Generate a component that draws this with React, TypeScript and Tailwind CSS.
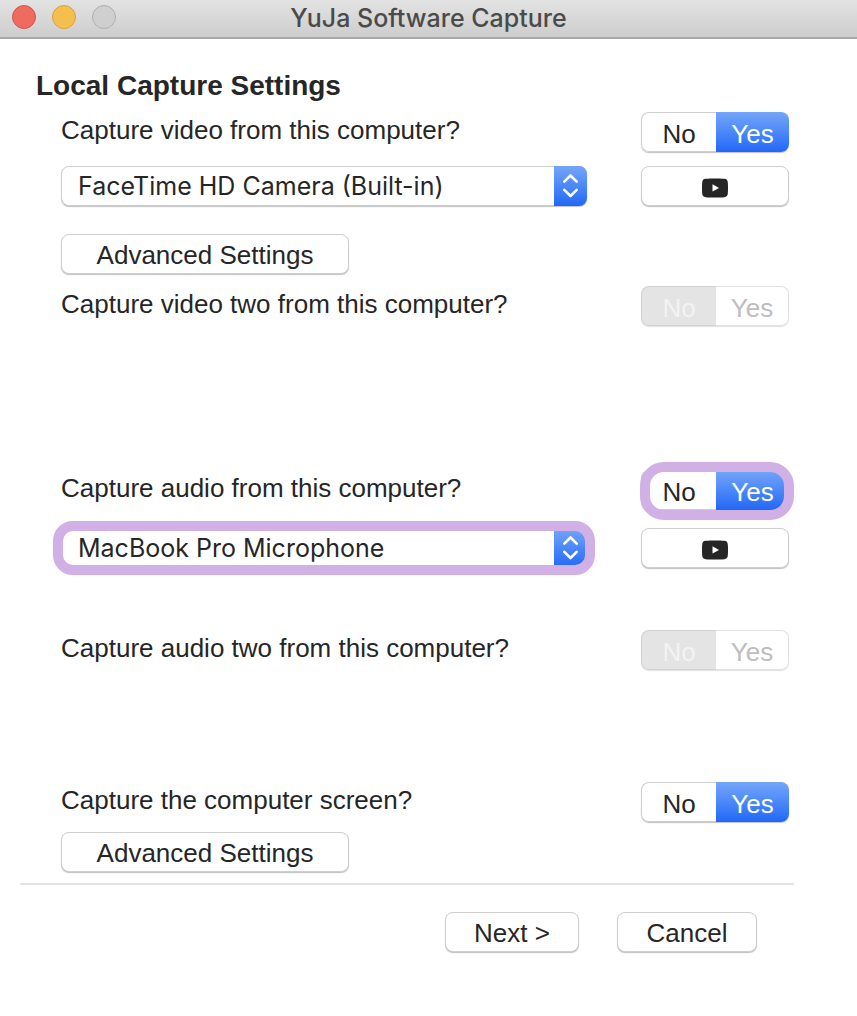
import { useState } from "react";

function YesNo({
  name,
  label,
  initial,
  disabled = false,
  highlighted = false,
}: {
  name: string;
  label: string;
  initial: "no" | "yes";
  disabled?: boolean;
  highlighted?: boolean;
}) {
  const [value, setValue] = useState(initial);

  return (
    <div
      role="radiogroup"
      aria-label={label}
      className={`relative flex h-10 w-[148px] shrink-0 rounded-lg ${
        disabled
          ? "shadow-[0_1px_1px_rgba(0,0,0,0.12)]"
          : "shadow-[0_1px_1px_rgba(0,0,0,0.25)]"
      }`}
    >
      <label className="flex w-[75px]">
        <input
          type="radio"
          name={name}
          checked={value === "no"}
          onChange={() => setValue("no")}
          disabled={disabled}
          className="peer sr-only"
        />
        <span className="flex w-full items-center justify-center rounded-l-lg border border-r-0 border-[#cfcfcf] bg-white pt-1 text-[#262626] peer-checked:border-[#2f70f6] peer-checked:bg-linear-to-b peer-checked:from-[#74a5f8] peer-checked:to-[#2167f7] peer-checked:text-white peer-disabled:border-[#d2d2d2] peer-disabled:bg-[#e4e4e4] peer-disabled:bg-none peer-disabled:text-[#f3f3f3]">
          No
        </span>
      </label>
      <label className="flex flex-1">
        <input
          type="radio"
          name={name}
          checked={value === "yes"}
          onChange={() => setValue("yes")}
          disabled={disabled}
          className="peer sr-only"
        />
        <span className="flex w-full items-center justify-center rounded-r-lg border border-l-0 border-[#cfcfcf] bg-white pt-1 text-[#262626] peer-checked:border-0 peer-checked:bg-linear-to-b peer-checked:from-[#74a5f8] peer-checked:to-[#2167f7] peer-checked:text-white peer-disabled:border-[#e2e2e2] peer-disabled:text-[#bdbdbd]">
          Yes
        </span>
      </label>
      {highlighted && (
        <span className="pointer-events-none absolute -top-2 -right-[5px] -bottom-[10px] -left-px rounded-3xl border-[10px] border-[#d0b0e5]" />
      )}
    </div>
  );
}

function DeviceSelect({
  label,
  options,
  highlighted = false,
}: {
  label: string;
  options: string[];
  highlighted?: boolean;
}) {
  return (
    <div className="relative flex h-10 max-w-[526px] flex-1">
      <select
        aria-label={label}
        className="w-full appearance-none rounded-lg border border-[#cfcfcf] bg-white pr-10 pl-4 font-['Inter',sans-serif] text-[25px] text-[#262626] shadow-[0_1px_1px_rgba(0,0,0,0.25)]"
      >
        {options.map((option) => (
          <option key={option}>{option}</option>
        ))}
      </select>
      <span className="pointer-events-none absolute inset-y-0 right-0 flex w-[33px] items-center justify-center rounded-r-lg bg-linear-to-b from-[#74a5f8] to-[#2167f7]">
        <svg
          className="h-6 w-4"
          viewBox="0 0 16 24"
          fill="none"
          stroke="white"
          strokeWidth="2.6"
          strokeLinecap="round"
          strokeLinejoin="round"
        >
          <path d="M1.3 7.7 7.5 1.5l6.2 6.2M1.3 15.8 7.500 22l6.200-6.200" />
        </svg>
      </span>
      {highlighted && (
        <span className="pointer-events-none absolute -inset-x-2 -inset-y-[7px] rounded-[20px] border-[10px] border-[#d0b0e5]" />
      )}
    </div>
  );
}

const buttonStyle =
  "flex h-10 items-center justify-center rounded-lg border border-[#cfcfcf] bg-white pt-0.5 shadow-[0_1px_1px_rgba(0,0,0,0.25)]";

function PreviewButton({ label }: { label: string }) {
  return (
    <button aria-label={label} className={`${buttonStyle} w-[148px] shrink-0`}>
      <svg className="h-[22px] w-[26px]" viewBox="0 0 26 22">
        <path
          d="M3.6 2.800C9 2.300 17 2.300 22.400 2.800c2.200.2 3.300 1.500 3.400 3.600.3 3.700.3 7.500 0 11.200-.1 2.100-1.200 3.400-3.400 3.600-5.400.5-13.400.5-18.800 0C1.400 21 .3 19.700.2 17.600c-.3-3.700-.3-7.500 0-11.200C.3 4.300 1.400 3 3.600 2.800Z"
          fill="#262626"
        />
        <path d="M10.500 8.300v7.200l6.500-3.600Z" fill="white" />
      </svg>
    </button>
  );
}

function Question({ children }: { children: string }) {
  return <p className="leading-9">{children}</p>;
}

export default function App() {
  return (
    <div className="min-h-screen bg-white font-['Liberation_Sans',Arial,sans-serif] text-[26px] leading-9 text-[#262626]">
      <header className="relative flex h-[39px] items-center justify-center border-b-2 border-[#a8a8a8] bg-linear-to-b from-[#e3e3e3] to-[#cdcdcd]">
        <div className="absolute top-[5px] left-3 flex gap-4">
          <button
            aria-label="Close"
            className="size-6 rounded-full border border-[#d9534b] bg-[#ed6b5f]"
          />
          <button
            aria-label="Minimize"
            className="size-6 rounded-full border border-[#dba03a] bg-[#f5bf4f]"
          />
          <button
            aria-label="Zoom"
            disabled
            className="size-6 rounded-full border border-[#b0b0b0] bg-[#cfcfcf]"
          />
        </div>
        <h1 className="pb-0.5 font-['Inter',sans-serif] text-[25px] font-medium text-[#4a4a4a]">
          YuJa Software Capture
        </h1>
      </header>

      <main className="pt-[29px]">
        <h2 className="pl-9 text-[28px] leading-9 font-bold">
          Local Capture Settings
        </h2>

        <div className="pr-[68px] pl-[61px]">
          <div className="mt-2 flex items-start justify-between">
            <Question>Capture video from this computer?</Question>
            <YesNo name="video" label="Capture video" initial="yes" />
          </div>
          <div className="mt-3.5 flex justify-between gap-[54px]">
            <DeviceSelect
              label="Camera"
              options={["FaceTime HD Camera (Built-in)"]}
            />
            <PreviewButton label="Preview video" />
          </div>
          <button className={`${buttonStyle} mt-7 w-72`}>
            Advanced Settings
          </button>
          <div className="mt-3 flex items-start justify-between">
            <Question>Capture video two from this computer?</Question>
            <YesNo
              name="video-two"
              label="Capture video two"
              initial="no"
              disabled
            />
          </div>

          <div className="mt-36 flex items-start justify-between">
            <Question>Capture audio from this computer?</Question>
            <YesNo
              name="audio"
              label="Capture audio"
              initial="yes"
              highlighted
            />
          </div>
          <div className="mt-[18px] flex justify-between gap-[54px]">
            <DeviceSelect
              label="Microphone"
              options={["MacBook Pro Microphone"]}
              highlighted
            />
            <PreviewButton label="Preview audio" />
          </div>
          <div className="mt-[62px] flex items-start justify-between">
            <Question>Capture audio two from this computer?</Question>
            <YesNo
              name="audio-two"
              label="Capture audio two"
              initial="no"
              disabled
            />
          </div>

          <div className="mt-28 flex items-start justify-between">
            <Question>Capture the computer screen?</Question>
            <YesNo name="screen" label="Capture the screen" initial="yes" />
          </div>
          <button className={`${buttonStyle} mt-[10px] w-72`}>
            Advanced Settings
          </button>
        </div>

        <hr className="mt-[11px] mr-[63px] ml-5 border-t-2 border-[#e3e3e3]" />

        <div className="mt-[27px] flex justify-end gap-[38px] pr-[100px]">
          <button className={`${buttonStyle} w-[134px]`}>Next &gt;</button>
          <button className={`${buttonStyle} w-[140px]`}>Cancel</button>
        </div>
      </main>
    </div>
  );
}
